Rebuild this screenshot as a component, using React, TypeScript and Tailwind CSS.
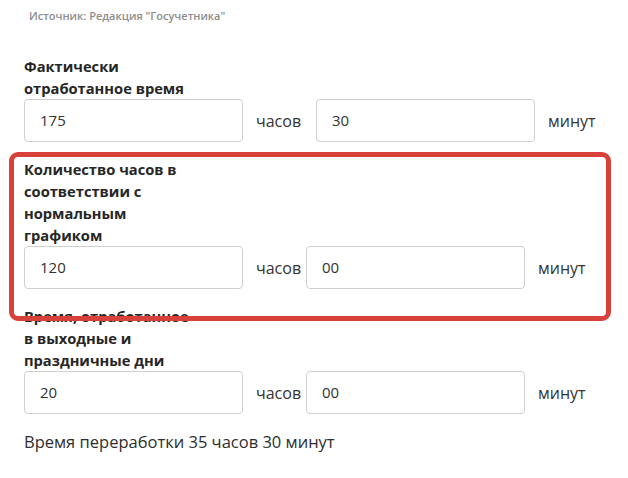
import React from "react";

type Row = {
  label: string[];
  hours: string;
  minutes: string;
  wide?: boolean;
};

const rows: Row[] = [
  { label: ["Фактически", "отработанное время"], hours: "175", minutes: "30", wide: true },
  {
    label: ["Количество часов в", "соответствии с", "нормальным", "графиком"],
    hours: "120",
    minutes: "00",
  },
  { label: ["Время, отработанное", "в выходные и", "праздничные дни"], hours: "20", minutes: "00" },
];

const font = { fontFamily: '"Open Sans", "DejaVu Sans", sans-serif' };

function Field({ value }: { value: string }) {
  return (
    <div className="w-[219px] h-[43px] shrink-0 rounded-[4px] border border-[#cfcfcf] bg-white flex items-center pl-[15px] text-[15px] text-[#333]">
      {value}
    </div>
  );
}

function TimeRow({ row }: { row: Row }) {
  return (
    <div className="mt-[16px] first:mt-0">
      <div className="text-[14.7px] leading-[22px] font-bold text-[#262626]">
        {row.label.map((l) => (
          <div key={l}>{l}</div>
        ))}
      </div>
      <div className="flex items-center">
        <Field value={row.hours} />
        <span className={"ml-[13px] text-[16px] text-[#333] shrink-0 " + (row.wide ? "w-[60px]" : "w-[50px]")}>
          часов
        </span>
        <Field value={row.minutes} />
        <span className="ml-[13px] text-[16px] text-[#333]">минут</span>
      </div>
    </div>
  );
}

export default function App() {
  return (
    <div className="relative w-[628px] h-[478px] bg-white overflow-hidden" style={font}>
      <p className="pl-[29px] pt-[8px] text-[11px] leading-[16px] font-semibold text-[#8c8c8c]">
        Источник: Редакция "Госучетника"
      </p>
      <div className="pl-[24px] mt-[31px]">
        {rows.map((r) => (
          <TimeRow key={r.hours} row={r} />
        ))}
        <p className="mt-[16px] text-[16.5px] leading-[24px] text-[#2e2e2e]">
          Время переработки 35 часов 30 минут
        </p>
      </div>
      <div className="pointer-events-none absolute z-10 left-[9px] top-[152px] w-[602px] h-[169px] rounded-[9px] border-[5px] border-[#d8403a]" />
    </div>
  );
}
